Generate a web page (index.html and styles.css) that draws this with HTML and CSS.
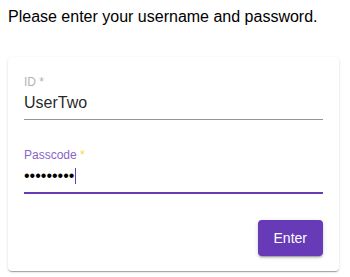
FILE: index.html
```html
<!DOCTYPE html>
<html>
<head>
<meta charset="utf-8">
<link rel="stylesheet" href="styles.css">
</head>
<body>
<div class="intro">Please enter your username and password.</div>
<div class="card">
  <div class="field">
    <div class="label label-idle">ID *</div>
    <div class="value">UserTwo</div>
    <div class="line"></div>
  </div>
  <div class="field field-second">
    <div class="label label-focus">Passcode <span class="req">*</span></div>
    <div class="value dots">•••••••••<span class="caret"></span></div>
    <div class="line line-focus"></div>
  </div>
  <div class="actions">
    <button class="btn">Enter</button>
  </div>
</div>
</body>
</html>
```
FILE: styles.css
```css
html, body {
  margin: 0;
  padding: 0;
  background: #ffffff;
}
body {
  padding: 8px;
  font-family: "Liberation Sans", Arial, sans-serif;
  color: #000000;
}
.intro {
  font-size: 16px;
  line-height: 18px;
  height: 18px;
}
.card {
  margin-top: 31px;
  width: 331px;
  box-sizing: border-box;
  padding: 18px 16px 15px 16px;
  background: #ffffff;
  border-radius: 4px;
  box-shadow: 0 2px 1px -1px rgba(0,0,0,.2), 0 1px 1px 0 rgba(0,0,0,.14), 0 1px 3px 0 rgba(0,0,0,.12);
}
.field {
  display: flex;
  flex-direction: column;
}
.field-second {
  margin-top: 28px;
}
.label {
  font-size: 12px;
  line-height: 14px;
}
.label-idle {
  color: #b3b3b3;
}
.label-focus {
  color: #8a63c9;
}
.req {
  color: #ffd740;
}
.value {
  margin-top: 5px;
  font-size: 16px;
  line-height: 18px;
  color: rgba(0,0,0,.87);
  display: flex;
  align-items: center;
}
.dots {
  color: #000000;
}
.caret {
  display: inline-block;
  width: 1px;
  height: 16px;
  background: #673ab7;
  margin-left: 1px;
}
.line {
  margin-top: 7px;
  height: 1px;
  background: #949494;
}
.line-focus {
  height: 2px;
  background: #673ab7;
}
.actions {
  margin-top: 26px;
  display: flex;
  justify-content: flex-end;
}
.btn {
  height: 36px;
  padding: 0 16px;
  border: none;
  border-radius: 4px;
  background: #673ab7;
  color: #ffffff;
  font-family: "Liberation Sans", Arial, sans-serif;
  font-size: 14px;
  line-height: 36px;
  box-shadow: 0 3px 1px -2px rgba(0,0,0,.2), 0 2px 2px 0 rgba(0,0,0,.14), 0 1px 5px 0 rgba(0,0,0,.12);
}
```
